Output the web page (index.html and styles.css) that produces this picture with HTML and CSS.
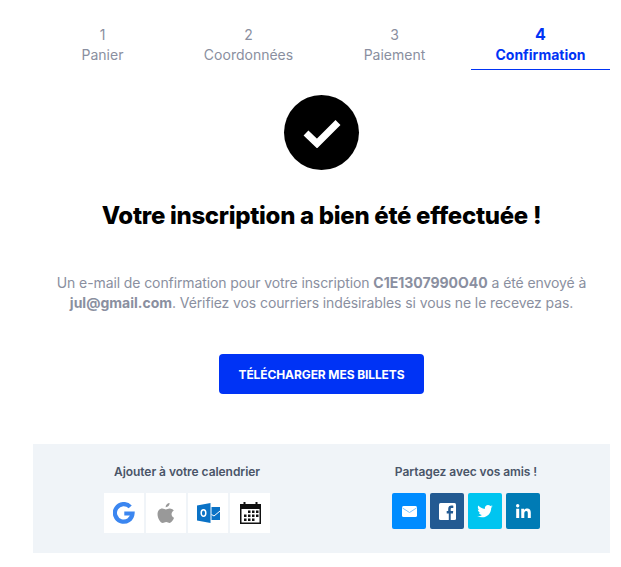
FILE: index.html
```html
<!DOCTYPE html>
<html lang="fr">
<head>
<meta charset="UTF-8" />
<meta name="viewport" content="width=device-width, initial-scale=1" />
<title>Confirmation</title>
<link rel="stylesheet" href="styles.css">
</head>
<body>
<div class="container" role="main">
  <ol class="steps">
    <li class="step"><span class="step-num">1</span><span class="step-label">Panier</span></li>
    <li class="step"><span class="step-num">2</span><span class="step-label">Coordonnées</span></li>
    <li class="step"><span class="step-num">3</span><span class="step-label">Paiement</span></li>
    <li class="step step-active"><span class="step-num">4</span><span class="step-label">Confirmation</span></li>
  </ol>

  <div class="check">
    <svg width="38" height="30" viewBox="0 0 38 30"><path d="M3 15 L14 25.500 L35 4.500" fill="none" stroke="#fff" stroke-width="7"/></svg>
  </div>

  <h1>Votre inscription a bien été effectuée !</h1>

  <p class="message">
    Un e-mail de confirmation pour votre inscription <strong>C1E1307990O40</strong> a été envoyé à
    <strong>jul@gmail.com</strong>. Vérifiez vos courriers indésirables si vous ne le recevez pas.
  </p>

  <a href="#" class="btn-download">Télécharger mes billets</a>

  <div class="panel">
    <div class="panel-group">
      <div class="panel-title">Ajouter à votre calendrier</div>
      <div class="tiles">
        <a href="#" class="tile" aria-label="Google">
          <svg width="22" height="22" viewBox="0 0 22 22"><path d="M17.200 4.900A8.800 8.800 0 1 0 19.500 11.500H11.300" fill="none" stroke="#3b86f0" stroke-width="4.200"/></svg>
        </a>
        <a href="#" class="tile" aria-label="Apple">
          <svg width="18" height="22" viewBox="0 0 20 24"><path d="M14 1c.1 2.500-2 4.700-4.400 4.500C9.400 3.200 11.700 1.100 14 1zM19 17.300c-.9 2.300-3 5.700-5 5.700-1.500 0-2-.9-3.800-.9s-2.400.9-3.800.9C3.700 23 .6 17.500.6 13.300.6 9.200 3.200 6.900 5.800 6.900c1.700 0 3 1.100 4.100 1.100s2.600-1.200 4.500-1.100c1.500.1 3.300.7 4.300 2.300-3.700 2.300-3.100 6.700.3 8.100z" fill="#999"/></svg>
        </a>
        <a href="#" class="tile" aria-label="Outlook">
          <svg width="23" height="20" viewBox="0 0 23 20"><path d="M0 2.500 13.500 0v20L0 17.500z" fill="#0a72c6"/><path d="M14.500 4h8.500v13h-8.500z" fill="#0a72c6"/><path d="M14.500 11.500 17 13l6-5" fill="none" stroke="#fff" stroke-width="1"/><ellipse cx="6.500" cy="10" rx="2.300" ry="3.300" fill="none" stroke="#fff" stroke-width="1.500"/></svg>
        </a>
        <a href="#" class="tile" aria-label="Calendrier">
          <svg width="21" height="22" viewBox="0 0 21 22"><path d="M0 2h21v20H0z" fill="#111"/><path d="M1.500 7h18v13.500h-18z" fill="#fff"/><path d="M3.500 0h2v4h-2zM15.500 0h2v4h-2z" fill="#111"/><path d="M8 8.500h2.500V11H8zM12 8.500h2.500V11H12zM16 8.500h2.500V11H16zM4 12.500h2.500V15H4zM8 12.500h2.500V15H8zM12 12.500h2.500V15H12zM16 12.500h2.500V15H16zM4 16.500h2.500V19H4zM8 16.500h2.500V19H8zM12 16.500h2.500V19H12z" fill="#111"/></svg>
        </a>
      </div>
    </div>
    <div class="panel-group">
      <div class="panel-title">Partagez avec vos amis !</div>
      <div class="tiles tiles-share">
        <a href="#" class="share share-mail" aria-label="E-mail">
          <svg width="15" height="11" viewBox="0 0 15 11"><rect width="15" height="11" rx="1.500" fill="#fff"/><path d="M.5 2 7.500 6.500l7-4.500" fill="none" stroke="#7cc2ff" stroke-width="1"/></svg>
        </a>
        <a href="#" class="share share-fb" aria-label="Facebook">
          <svg width="17" height="17" viewBox="0 0 17 17"><rect width="17" height="17" rx="1.500" fill="#fff"/><path d="M11.700 17v-6.500h2.200l.3-2.600h-2.500V6.300c0-.8.2-1.300 1.300-1.300h1.300V2.700c-.3 0-1-.1-1.900-.1-1.900 0-3.200 1.200-3.200 3.300v2H7.700v2.600h2.100V17z" fill="#235a92"/></svg>
        </a>
        <a href="#" class="share share-tw" aria-label="Twitter">
          <svg width="16" height="13" viewBox="0 0 24 20"><path d="M24 2.400c-.9.400-1.800.7-2.800.8 1-.6 1.800-1.600 2.200-2.700-1 .6-2 1-3.100 1.200C19.300.7 18 0 16.600 0c-2.700 0-4.900 2.200-4.900 4.900 0 .4 0 .8.100 1.100C7.700 5.800 4.100 3.900 1.700.9c-.4.700-.7 1.600-.7 2.500 0 1.700.9 3.200 2.200 4.100-.8 0-1.600-.2-2.200-.6v.1c0 2.400 1.700 4.400 3.900 4.800-.4.100-.8.200-1.300.2-.3 0-.6 0-.9-.1.600 2 2.400 3.400 4.600 3.400-1.700 1.300-3.800 2.100-6.100 2.100-.4 0-.8 0-1.200-.1C2.200 18.300 4.800 19 7.500 19c9.100 0 14-7.500 14-14v-.6c1-.7 1.800-1.500 2.500-2z" fill="#fff"/></svg>
        </a>
        <a href="#" class="share share-in" aria-label="LinkedIn">
          <svg width="15" height="14" viewBox="0 0 15 14"><path d="M.2 4.700h3v9.300h-3zM1.700 0a1.700 1.700 0 1 1 0 3.400 1.700 1.700 0 0 1 0-3.400zM5.200 4.700h2.900V6c.5-.9 1.500-1.500 2.900-1.500 3 0 3.800 1.900 3.800 4.500V14h-3V9.500c0-1.100-.1-2.400-1.500-2.400s-2 1.100-2 2.400V14h-3z" fill="#fff"/></svg>
        </a>
      </div>
    </div>
  </div>
</div>
</body>
</html>
```
FILE: styles.css
```css
/* Reset and base */
* {
  box-sizing: border-box;
}
body {
  margin: 0;
  font-family: Inter, 'Liberation Sans', sans-serif;
  background-color: #fff;
  color: #8a8fa0;
}
.container {
  display: flex;
  flex-direction: column;
  align-items: center;
  padding: 24px 11px 0 33px;
}

/* Stepper */
.steps {
  display: grid;
  grid-template-columns: repeat(4, 1fr);
  gap: 7px;
  width: 100%;
  margin: 0;
  padding: 0;
  list-style: none;
}
.step {
  display: flex;
  flex-direction: column;
  align-items: center;
  height: 46px;
  font-size: 14px;
  line-height: 21px;
}
.step-label {
  line-height: 19px;
}
.step-active {
  color: #0033f5;
  font-weight: 700;
  border-bottom: 1px solid #0033f5;
}
.step-active .step-num {
  font-size: 16px;
}

/* Success */
.check {
  display: flex;
  align-items: center;
  justify-content: center;
  width: 75px;
  height: 75px;
  margin-top: 25px;
  border-radius: 50%;
  background-color: #000;
}
h1 {
  margin: 29px 0 0 0;
  color: #000;
  font-size: 24px;
  line-height: 34px;
  font-weight: 800;
  letter-spacing: -0.3px;
}
.message {
  margin: 40px 0 0 0;
  width: 540px;
  font-size: 14px;
  line-height: 20px;
  letter-spacing: -0.1px;
  text-align: center;
}
.message strong {
  font-weight: 700;
  letter-spacing: 0;
}
.btn-download {
  display: flex;
  align-items: center;
  justify-content: center;
  width: 205px;
  height: 40px;
  margin-top: 41px;
  border-radius: 4px;
  background-color: #0033f5;
  color: #fff;
  font-size: 12px;
  font-weight: 700;
  letter-spacing: -0.1px;
  text-decoration: none;
  text-transform: uppercase;
}

/* Bottom panel */
.panel {
  display: flex;
  justify-content: center;
  gap: 122px;
  width: 100%;
  height: 109px;
  margin-top: 50px;
  padding: 20px 0 0 1px;
  background-color: #f0f4f8;
}
.panel-group {
  display: flex;
  flex-direction: column;
  align-items: center;
  gap: 13px;
}
.panel-title {
  color: #4a5568;
  font-size: 12px;
  line-height: 16px;
  font-weight: 600;
  letter-spacing: -0.05px;
  white-space: nowrap;
}
.tiles {
  display: flex;
  gap: 2px;
}
.tiles-share {
  gap: 4px;
}
.tile {
  display: flex;
  align-items: center;
  justify-content: center;
  width: 40px;
  height: 40px;
  background-color: #fff;
}
.share {
  display: flex;
  align-items: center;
  justify-content: center;
  width: 34px;
  height: 36px;
  border-radius: 2px;
}
.share-mail {
  background-color: #008cff;
}
.share-fb {
  background-color: #235a92;
}
.share-tw {
  background-color: #00c5f0;
}
.share-in {
  background-color: #007bb5;
}
```
